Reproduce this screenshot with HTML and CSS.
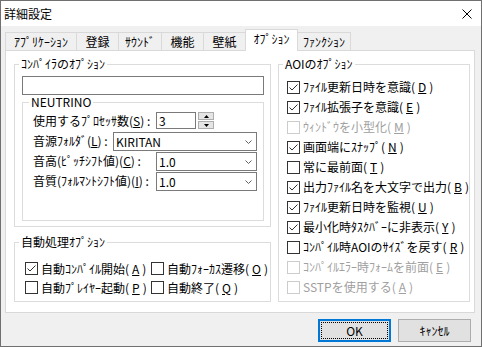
FILE: index.html
```html
<!DOCTYPE html>
<html lang="ja">
<head>
  <meta charset="UTF-8" />
  <title>詳細設定</title>
  <link rel="stylesheet" href="styles.css">
</head>
<body>

<div class="window">
  <div class="titlebar">
    <span class="title">詳細設定</span>
    <svg class="close" width="10" height="10" viewBox="0 0 10 10"><path d="M0.5 0.5L9.5 9.5M9.5 0.5L0.5 9.5" stroke="#000" stroke-width="1" fill="none"/></svg>
  </div>

  <div class="tabs">
    <div class="tab">ｱﾌﾟﾘｹｰｼｮﾝ</div>
    <div class="tab">登録</div>
    <div class="tab">ｻｳﾝﾄﾞ</div>
    <div class="tab">機能</div>
    <div class="tab">壁紙</div>
    <div class="tab active">ｵﾌﾟｼｮﾝ</div>
    <div class="tab">ﾌｧﾝｸｼｮﾝ</div>
  </div>

  <div class="panel">
    <div class="col-left">
      <fieldset class="group compiler">
        <legend>ｺﾝﾊﾟｲﾗのｵﾌﾟｼｮﾝ</legend>
        <div class="textbox"></div>
        <fieldset class="group neutrino">
          <legend>NEUTRINO</legend>
          <div class="fields">
            <div class="field">
              <span class="field-label">使用するﾌﾟﾛｾｯｻ数(<u>S</u>) :</span>
              <div class="spin-input">3</div>
              <div class="spin-buttons">
                <span class="spin-btn"><svg width="5" height="3" viewBox="0 0 5 3"><path d="M2.5 0L5 3H0Z" fill="#000"/></svg></span>
                <span class="spin-btn"><svg width="5" height="3" viewBox="0 0 5 3"><path d="M0 0H5L2.5 3Z" fill="#000"/></svg></span>
              </div>
            </div>
            <div class="field">
              <span class="field-label short">音源ﾌｫﾙﾀﾞ(<u>L</u>) :</span>
              <div class="combo wide"><span>KIRITAN</span><svg width="7" height="4" viewBox="0 0 7 4"><path d="M0.5 0.5L3.5 3.5L6.5 0.5" stroke="#606060" fill="none"/></svg></div>
            </div>
            <div class="field">
              <span class="field-label">音高(ﾋﾟｯﾁｼﾌﾄ値)(<u>C</u>) :</span>
              <div class="combo"><span>1.0</span><svg width="7" height="4" viewBox="0 0 7 4"><path d="M0.5 0.5L3.5 3.5L6.5 0.5" stroke="#606060" fill="none"/></svg></div>
            </div>
            <div class="field">
              <span class="field-label">音質(ﾌｫﾙﾏﾝﾄｼﾌﾄ値)(<u>I</u>) :</span>
              <div class="combo"><span>1.0</span><svg width="7" height="4" viewBox="0 0 7 4"><path d="M0.5 0.5L3.5 3.5L6.5 0.5" stroke="#606060" fill="none"/></svg></div>
            </div>
          </div>
        </fieldset>
      </fieldset>

      <fieldset class="group auto">
        <legend>自動処理ｵﾌﾟｼｮﾝ</legend>
        <div class="auto-grid">
          <label class="check-item"><span class="box"><svg width="11" height="11" viewBox="0 0 11 11"><path d="M1.5 5.5L4 8L9.5 2.5" stroke="#333" fill="none"/></svg></span>自動ｺﾝﾊﾟｲﾙ開始(<u>A</u>)</label>
          <label class="check-item"><span class="box"></span>自動ﾌｫｰｶｽ遷移(<u>O</u>)</label>
          <label class="check-item"><span class="box"></span>自動ﾌﾟﾚｲﾔｰ起動(<u>P</u>)</label>
          <label class="check-item"><span class="box"></span>自動終了(<u>Q</u>)</label>
        </div>
      </fieldset>
    </div>

    <fieldset class="group aoi">
      <legend>AOIのｵﾌﾟｼｮﾝ</legend>
      <div class="aoi-list">
        <label class="check-item"><span class="box"><svg width="11" height="11" viewBox="0 0 11 11"><path d="M1.5 5.5L4 8L9.5 2.5" stroke="#333" fill="none"/></svg></span>ﾌｧｲﾙ更新日時を意識(<u>D</u>)</label>
        <label class="check-item"><span class="box"><svg width="11" height="11" viewBox="0 0 11 11"><path d="M1.5 5.5L4 8L9.5 2.5" stroke="#333" fill="none"/></svg></span>ﾌｧｲﾙ拡張子を意識(<u>E</u>)</label>
        <label class="check-item disabled"><span class="box"></span>ｳｨﾝﾄﾞｳを小型化(<u>M</u>)</label>
        <label class="check-item"><span class="box"><svg width="11" height="11" viewBox="0 0 11 11"><path d="M1.5 5.5L4 8L9.5 2.5" stroke="#333" fill="none"/></svg></span>画面端にｽﾅｯﾌﾟ(<u>N</u>)</label>
        <label class="check-item"><span class="box"></span>常に最前面(<u>T</u>)</label>
        <label class="check-item"><span class="box"><svg width="11" height="11" viewBox="0 0 11 11"><path d="M1.5 5.5L4 8L9.5 2.5" stroke="#333" fill="none"/></svg></span>出力ﾌｧｲﾙ名を大文字で出力(<u>B</u>)</label>
        <label class="check-item"><span class="box"><svg width="11" height="11" viewBox="0 0 11 11"><path d="M1.5 5.5L4 8L9.5 2.5" stroke="#333" fill="none"/></svg></span>ﾌｧｲﾙ更新日時を監視(<u>U</u>)</label>
        <label class="check-item"><span class="box"><svg width="11" height="11" viewBox="0 0 11 11"><path d="M1.5 5.5L4 8L9.5 2.5" stroke="#333" fill="none"/></svg></span>最小化時ﾀｽｸﾊﾞｰに非表示(<u>Y</u>)</label>
        <label class="check-item"><span class="box"></span>ｺﾝﾊﾟｲﾙ時AOIのｻｲｽﾞを戻す(<u>R</u>)</label>
        <label class="check-item disabled"><span class="box"></span>ｺﾝﾊﾟｲﾙｴﾗｰ時ﾌｫｰﾑを前面(<u>E</u>)</label>
        <label class="check-item disabled"><span class="box"></span>SSTPを使用する(<u>A</u>)</label>
      </div>
    </fieldset>
  </div>

  <div class="buttons">
    <button class="btn default">OK</button>
    <button class="btn">ｷｬﾝｾﾙ</button>
  </div>
</div>

</body>
</html>
```

FILE: styles.css
```css
body {
  margin: 0;
  font-family: "Noto Sans CJK JP", "Noto Sans", sans-serif;
  font-size: 12px;
  color: #000;
  text-autospace: no-autospace;
}
.window {
  width: 482px;
  height: 347px;
  box-sizing: border-box;
  border: 1px solid #707070;
  background: #f0f0f0;
  display: flex;
  flex-direction: column;
}
.titlebar {
  height: 25px;
  flex-shrink: 0;
  background: #fff;
  display: flex;
  align-items: center;
  justify-content: space-between;
  padding: 0 9px 0 3px;
}
.title {
  line-height: 16px;
}

/* tabs */
.tabs {
  display: grid;
  grid-template-columns: 71px 42px 43px 42px 42px 52px 53px;
  align-items: end;
  height: 22px;
  margin: 3px 0 -1px 4px;
  position: relative;
  z-index: 1;
}
.tab {
  height: 18px;
  margin: 0 -1px 1px 0;
  box-sizing: border-box;
  border: 1px solid #d9d9d9;
  border-bottom: none;
  display: flex;
  align-items: center;
  justify-content: center;
  line-height: 16px;
  padding-top: 1px;
}
.tab.active {
  height: 22px;
  margin-bottom: 0;
  background: #fff;
  padding: 0 0 3px;
  z-index: 1;
}

.panel {
  width: 470px;
  height: 263px;
  flex-shrink: 0;
  margin-left: 4px;
  box-sizing: border-box;
  border: 1px solid #d9d9d9;
  background: #fff;
  display: flex;
  gap: 7px;
  padding: 6px 0 0 8px;
}
.col-left {
  width: 257px;
  display: flex;
  flex-direction: column;
  gap: 8px;
}

/* group boxes */
.group {
  margin: 0;
  padding: 0;
  min-width: 0;
  box-sizing: border-box;
  border: 1px solid #dcdcdc;
}
.group legend {
  margin-left: 4px;
  padding: 0 2px;
  line-height: 14px;
}
.compiler {
  height: 170px;
}
.textbox {
  width: 242px;
  height: 19px;
  box-sizing: border-box;
  margin: 5px 0 0 7px;
  border: 1px solid #7a7a7a;
  background: #fff;
}
.neutrino {
  width: 242px;
  height: 126px;
  margin-left: 7px;
}
.neutrino legend {
  margin-left: 6px;
}
.fields {
  padding: 3px 0 0 10px;
}
.field {
  display: flex;
  height: 20px;
}
.field-label {
  width: 123px;
  flex-shrink: 0;
  white-space: nowrap;
  line-height: 18px;
}
.field-label.short {
  width: 80px;
}
.spin-input {
  width: 40px;
  height: 17px;
  box-sizing: border-box;
  border: 1px solid #7a7a7a;
  padding-left: 2px;
  line-height: 15px;
}
.spin-buttons {
  width: 16px;
  height: 17px;
  margin-left: 2px;
  display: flex;
  flex-direction: column;
  gap: 1px;
}
.spin-btn {
  height: 8px;
  box-sizing: border-box;
  border: 1px solid #adadad;
  background: #e5e5e5;
  display: flex;
  align-items: center;
  justify-content: center;
}
.combo {
  width: 101px;
  height: 19px;
  box-sizing: border-box;
  border: 1px solid #7a7a7a;
  background: #fff;
  display: flex;
  align-items: center;
  justify-content: space-between;
  padding: 0 4px 0 2px;
  line-height: 16px;
}
.combo.wide {
  width: 144px;
}

.auto {
  height: 67px;
}
.auto-grid {
  display: grid;
  grid-template-columns: 126px auto;
  padding: 10px 0 0 10px;
}
.aoi {
  width: 192px;
  height: 245px;
}
.aoi-list {
  padding: 6px 0 0 8px;
}
.check-item {
  display: flex;
  align-items: center;
  gap: 3px;
  white-space: nowrap;
  line-height: 16px;
  height: 19px;
}
.aoi .check-item {
  height: 20px;
}
.box {
  width: 13px;
  height: 13px;
  flex-shrink: 0;
  box-sizing: border-box;
  border: 1px solid #333;
  background: #fff;
  display: flex;
}
.check-item.disabled {
  color: #a0a0a0;
}
.check-item.disabled .box {
  border-color: #cccccc;
}

/* dialog buttons */
.buttons {
  display: flex;
  justify-content: flex-end;
  gap: 7px;
  margin-top: 6px;
  padding-right: 10px;
}
.btn {
  width: 73px;
  height: 23px;
  box-sizing: border-box;
  border: 1px solid #adadad;
  background: #e1e1e1;
  font-family: inherit;
  font-size: 12px;
  font-weight: normal;
  color: #000;
  padding: 0;
}
.btn.default {
  border: 2px solid #0078d7;
  outline: 1px dotted #000;
  outline-offset: -4px;
}
```
